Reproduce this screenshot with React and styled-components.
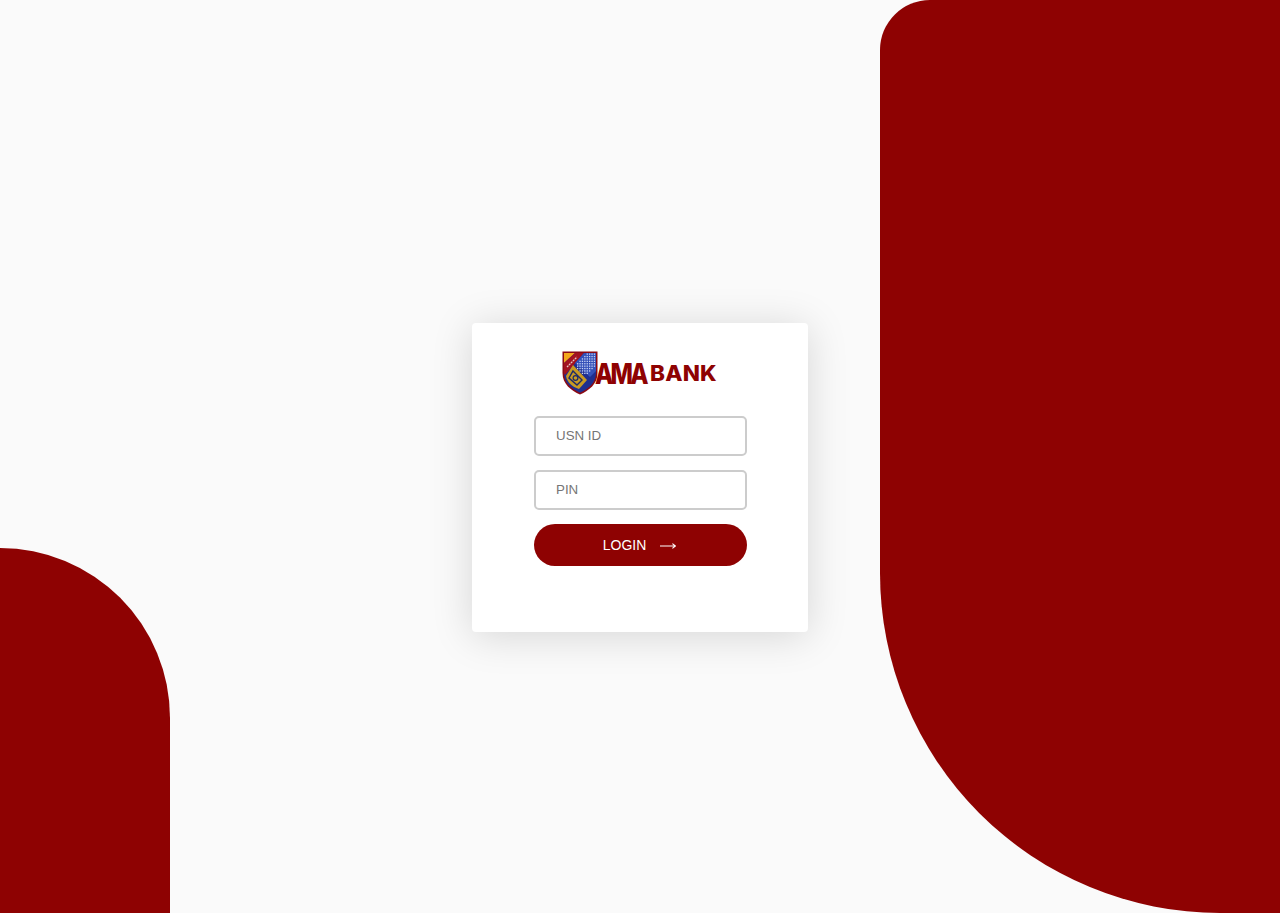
import React from "react";
import styled, { createGlobalStyle } from "styled-components";

const Global = createGlobalStyle`
  html, body { margin: 0; padding: 0; height: 100%; }
  body { background: #fafafa; font-family: "Liberation Sans", Arial, sans-serif; overflow: hidden; }
  #root { height: 100%; }
`;

const Page = styled.main`
  position: relative;
  box-sizing: border-box;
  height: 913px;
  padding-top: 323px;
  overflow: hidden;
  display: flex;
  align-items: flex-start;
  justify-content: center;
  background: #fafafa;
`;

const BlobRight = styled.div`
  position: absolute;
  top: 0;
  right: 0;
  width: 400px;
  height: 913px;
  background: #8e0202;
  border-top-left-radius: 50px;
  border-bottom-left-radius: 340px;
`;

const BlobLeft = styled.div`
  position: absolute;
  left: 0;
  bottom: 0;
  width: 170px;
  height: 365px;
  background: #8e0202;
  border-top-right-radius: 170px;
`;

const Card = styled.section`
  position: relative;
  box-sizing: border-box;
  width: 336px;
  height: 309px;
  padding: 28px 61px 0 62px;
  background: #fff;
  border-radius: 4px;
  box-shadow: 0 4px 40px rgba(0, 0, 0, 0.15);
  display: flex;
  flex-direction: column;
  align-items: stretch;
`;

const Logo = styled.div`
  display: flex;
  align-items: flex-end;
  height: 44px;
  margin: 0 0 21px 28px;
  color: #8e0202;
  white-space: nowrap;
`;

const Ama = styled.span`
  font: 800 28px/1 "Inter", "Liberation Sans", sans-serif;
  letter-spacing: -3.2px;
  margin: 0 0 7px -3px;
  width: 55px;
  transform: scaleX(0.85);
  transform-origin: left bottom;
`;

const Bank = styled.span`
  font: 800 21px/1 "Inter", "Liberation Sans", sans-serif;
  letter-spacing: 0.2px;
  margin-bottom: 11px;
  transform: scaleX(1.07);
  transform-origin: left bottom;
`;

const Form = styled.form`
  display: flex;
  flex-direction: column;
  gap: 14px;
`;

const Input = styled.input`
  box-sizing: border-box;
  width: 213px;
  height: 40px;
  padding: 0 20px 2px;
  border: 2px solid #ccc;
  border-radius: 5px;
  background: #fff;
  outline: none;
  font: 13.333px "Liberation Sans", Arial, sans-serif;
  color: #333;
  &::placeholder { color: #757575; opacity: 1; }
`;

const Button = styled.button`
  box-sizing: border-box;
  width: 213px;
  height: 42px;
  display: flex;
  align-items: center;
  justify-content: center;
  gap: 14px;
  padding: 0 2px 0 0;
  border: 0;
  border-radius: 21px;
  background: #8e0202;
  color: #fff;
  font: 14px "Liberation Sans", Arial, sans-serif;
  cursor: pointer;
`;

const Arrow = () => (
  <svg width="16" height="8" viewBox="0 0 16 8" fill="none" stroke="#fff" strokeWidth="1.1" style={{ marginTop: 2 }}>
    <path d="M0 4H15.2M12.4 1.6 15.4 4 12.4 6.4" />
  </svg>
);

const Shield = () => {
  const dots = [];
  for (let r = 0; r < 9; r++) {
    for (let c = 0; c < 9; c++) {
      const x = 15 + c * 2.4;
      const y = 2.5 + r * 2.4;
      if (x + y > 26 && x + y < 48 && y < x + 2 && x < 33) dots.push(<rect key={`${r}-${c}`} x={x} y={y} width="1.3" height="1.3" fill="#c9d4f6" />);
    }
  }
  return (
    <svg width="36" height="44" viewBox="0 0 36 44" style={{ flex: "none" }}>
      <path d="M.5.5H35.5V22C35.5 33 27 39.5 18 43.5 9 39.5.5 33 .5 22Z" fill="#8b0a14" />
      <path d="M2 2H34V22C34 32 26 38 18 41.8 10 38 2 32 2 22Z" fill="#1f2f8f" />
      <path d="M2 2H13L2 12Z" fill="#f4a81c" />
      <path d="M13 2H22L3 24C2.3 23 2 22.5 2 22V12Z" fill="#a3121f" />
      <path d="M5 16 15 6" stroke="#e8c8c8" strokeWidth="1.3" strokeDasharray="2 .8" />
      <path d="M22 2H34V20L28 26 13 12Z" fill="#3450b8" />
      {dots}
      <path d="M11 14 25 29 17 38C10 36 5 31 4 25Z" fill="#c99a22" />
      <path d="M11 20 20 29 15 34 7 27Z" fill="none" stroke="#1b2a6b" strokeWidth="1.4" />
      <circle cx="13.5" cy="27" r="2.4" fill="none" stroke="#1b2a6b" strokeWidth="1.2" />
    </svg>
  );
};

export default function App() {
  return (
    <>
      <Global />
      <Page>
        <BlobRight />
        <BlobLeft />
        <Card>
          <Logo>
            <Shield />
            <Ama>AMA</Ama>
            <Bank>BANK</Bank>
          </Logo>
          <Form onSubmit={(e) => e.preventDefault()}>
            <Input placeholder="USN ID" />
            <Input placeholder="PIN" type="password" />
            <Button type="submit">
              LOGIN
              <Arrow />
            </Button>
          </Form>
        </Card>
      </Page>
    </>
  );
}
